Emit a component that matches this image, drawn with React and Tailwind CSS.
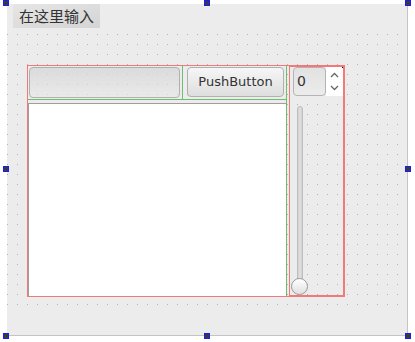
import React from "react";

function Handle({ cls }) {
  return (
    <div className={`absolute w-[6px] h-[6px] border border-[#1a1aff] bg-[#3a3a3a] ${cls}`} />
  );
}

export default function App() {
  const green = "border-[#6cbf6c]";
  const red = "border-[#f37878]";
  return (
    <div
      className="relative w-[415px] h-[342px] bg-white pl-[7px] pt-[4px] overflow-hidden"
      style={{ fontFamily: '"DejaVu Sans", "Noto Sans CJK SC", sans-serif' }}
    >
      <div className="w-[401px] h-[332px] bg-[#ececec] border-r border-b border-[#c4c4c4] flex flex-col">
        <div className="ml-[6px] w-[87px] h-[24px] flex items-center pl-[6px] text-[15px] text-[#333] bg-gradient-to-br from-[#e6e6e6] to-[#d4d4d4]" style={{ fontFamily: '"Noto Sans CJK SC", sans-serif' }}>
          在这里输入
        </div>
        <div className="mt-[5px] h-[272px] pl-[20px] pt-[32px] bg-[radial-gradient(circle_at_0.5px_0.5px,#b2b2b2_0.7px,transparent_0.9px)] bg-[size:10px_10px] bg-[position:0_1px]">
          <div className={`w-[318px] h-[232px] border ${red} flex`}>
            <div className={`w-[259px] border-r ${green} flex flex-col`}>
              <div className={`h-[34px] border-b ${green} flex`}>
                <div className={`w-[155px] border-r ${green}`}>
                  <div className="ml-[1px] mt-[1px] w-[151px] h-[31px] rounded-[4px] border border-[#b0b0b0] bg-gradient-to-b from-[rgba(214,214,214,0.75)] to-[rgba(232,232,232,0.6)]" />
                </div>
                <div className="flex-1">
                  <div className="ml-[4px] mt-[1px] w-[97px] h-[30px] rounded-[4px] border border-[#b0b0b0] bg-gradient-to-b from-[#f6f6f6] to-[#dedede] flex items-center justify-center text-[13px] text-[#333]">
                    PushButton
                  </div>
                </div>
              </div>
              <div className="mt-[3px] flex-1 bg-white border-t border-l border-[#9e9e9e]" />
            </div>
            <div className={`ml-[2px] w-[55px] h-full border ${red} flex flex-col`}>
              <div className="ml-[3px] h-[29px] flex">
                <div className="w-[33px] h-full rounded-[4px] border border-[#b4b4b4] bg-gradient-to-b from-[#e2e2e2] to-[#ececec] flex items-center pl-[3px] text-[14px] text-[#333]">
                  0
                </div>
                <div className="w-[17px] h-full bg-white relative flex flex-col items-center justify-around py-[2px]">
                  <div className="absolute right-0 top-0 w-[1px] h-[1px] bg-black" />
                  <svg width="9" height="6" viewBox="0 0 9 6">
                    <polyline points="1,5 4.5,1.5 8,5" fill="none" stroke="#666" strokeWidth="1.3" />
                  </svg>
                  <svg width="9" height="6" viewBox="0 0 9 6">
                    <polyline points="1,1 4.5,4.5 8,1" fill="none" stroke="#666" strokeWidth="1.3" />
                  </svg>
                </div>
              </div>
              <div className="relative flex-1">
                <div className="absolute left-[7px] top-[10px] bottom-[6px] w-[6px] rounded-t-[3px] border border-[#bdbdbd] bg-gradient-to-r from-[#d0d0d0] via-[#e2e2e2] to-[#cfcfcf]" />
                <div className="absolute left-[1px] bottom-0 w-[17px] h-[17px] rounded-full border border-[#9a9a9a] bg-gradient-to-b from-[#ffffff] to-[#e0e0e0]" />
              </div>
            </div>
          </div>
        </div>
      </div>
      <Handle cls="left-[3px] top-0" />
      <Handle cls="left-[204px] top-0" />
      <Handle cls="left-[405px] top-0" />
      <Handle cls="left-[3px] top-[166px]" />
      <Handle cls="left-[405px] top-[166px]" />
      <Handle cls="left-[3px] top-[333px]" />
      <Handle cls="left-[204px] top-[333px]" />
      <Handle cls="left-[405px] top-[333px]" />
    </div>
  );
}
